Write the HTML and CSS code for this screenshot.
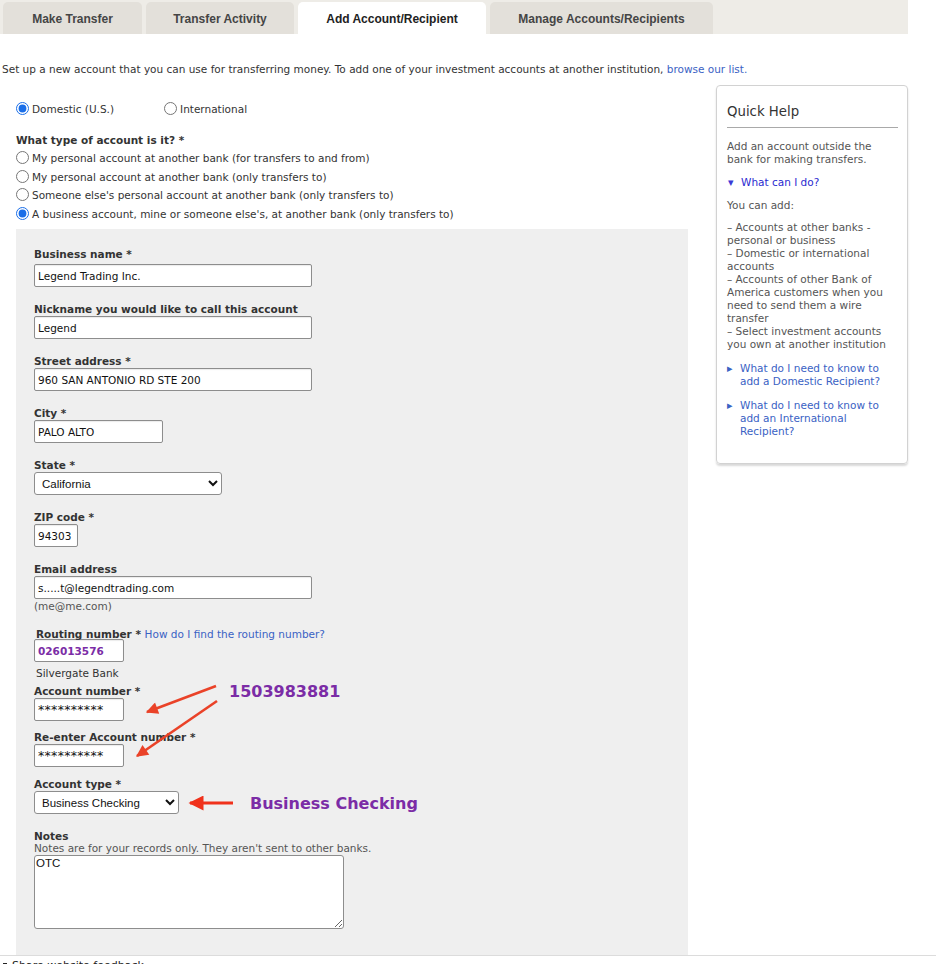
FILE: index.html
```html
<!DOCTYPE html>
<html lang="en">
<head>
  <meta charset="UTF-8" />
  <title>Add Account/Recipient</title>
  <link rel="stylesheet" href="styles.css">
</head>
<body>

  <div class="tabs">
    <div class="tab t1">Make Transfer</div>
    <div class="tab t2">Transfer Activity</div>
    <div class="tab t3 active">Add Account/Recipient</div>
    <div class="tab t4">Manage Accounts/Recipients</div>
  </div>

  <p class="intro">Set up a new account that you can use for transferring money. To add one of your investment accounts at another institution, <a href="#">browse our list.</a></p>

  <div class="layout">
    <div class="main">

      <div class="region">
        <label class="opt"><input type="radio" name="region" checked>Domestic (U.S.)</label>
        <label class="opt intl"><input type="radio" name="region">International</label>
      </div>

      <div class="question">What type of account is it? *</div>
      <label class="opt row"><input type="radio" name="kind">My personal account at another bank (for transfers to and from)</label>
      <label class="opt row"><input type="radio" name="kind">My personal account at another bank (only transfers to)</label>
      <label class="opt row"><input type="radio" name="kind">Someone else's personal account at another bank (only transfers to)</label>
      <label class="opt row"><input type="radio" name="kind" checked>A business account, mine or someone else's, at another bank (only transfers to)</label>

      <!-- form panel -->
      <div class="panel">
        <div class="field first">
          <label class="label">Business name *</label>
          <input class="input wide" value="Legend Trading Inc.">
        </div>
        <div class="field">
          <label class="label">Nickname you would like to call this account</label>
          <input class="input wide" value="Legend">
        </div>
        <div class="field">
          <label class="label">Street address *</label>
          <input class="input wide" value="960 SAN ANTONIO RD STE 200">
        </div>
        <div class="field">
          <label class="label">City *</label>
          <input class="input city" value="PALO ALTO">
        </div>
        <div class="field">
          <label class="label">State *</label>
          <select class="select state"><option>California</option></select>
        </div>
        <div class="field">
          <label class="label">ZIP code *</label>
          <input class="input zip" value="94303">
        </div>
        <div class="field email">
          <label class="label">Email address</label>
          <input class="input wide" value="s.....t@legendtrading.com">
          <div class="hint">(me@me.com)</div>
        </div>
        <div class="field routing">
          <label class="label">Routing number * <a href="#">How do I find the routing number?</a></label>
          <input class="input short purple" value="026013576">
          <div class="bank">Silvergate Bank</div>
        </div>
        <div class="field tight">
          <label class="label">Account number *</label>
          <input class="input short masked" value="**********">
        </div>
        <div class="field tighter">
          <label class="label">Re-enter Account number *</label>
          <input class="input short masked" value="**********">
        </div>
        <div class="field">
          <label class="label">Account type *</label>
          <select class="select acct"><option>Business Checking</option></select>
        </div>
        <div class="field notes">
          <label class="label">Notes</label>
          <div class="hint">Notes are for your records only. They aren't sent to other banks.</div>
          <textarea class="textarea">OTC</textarea>
        </div>

        <!-- red annotations over the form -->
        <svg class="marks" width="300" height="600" viewBox="0 0 300 600">
          <defs>
            <marker id="head" viewBox="0 0 10 10" refX="9" refY="5" markerWidth="15" markerHeight="12" markerUnits="userSpaceOnUse" orient="auto">
              <path d="M0 0 L10 5 L0 10 z" fill="#ea4228"/>
            </marker>
            <marker id="head2" viewBox="0 0 10 10" refX="9" refY="5" markerWidth="17" markerHeight="15" markerUnits="userSpaceOnUse" orient="auto">
              <path d="M0 0 L10 5 L0 10 z" fill="#f0311b"/>
            </marker>
          </defs>
          <line x1="200" y1="457" x2="131" y2="483" stroke="#ea4228" stroke-width="2.6" marker-end="url(#head)"/>
          <line x1="201" y1="472" x2="121" y2="527" stroke="#ea4228" stroke-width="2.6" marker-end="url(#head)"/>
          <line x1="217" y1="574" x2="174" y2="574" stroke="#f0311b" stroke-width="3" marker-end="url(#head2)"/>
        </svg>
        <span class="note n1">1503983881</span>
        <span class="note n2">Business Checking</span>
      </div>
    </div>

    <aside class="help">
      <h3 class="help-title">Quick Help</h3>
      <p>Add an account outside the bank for making transfers.</p>
      <p class="toggle open"><span class="caret">&#9662;</span><a href="#">What can I do?</a></p>
      <p>You can add:</p>
      <p class="list">&ndash; Accounts at other banks - personal or business<br>
        &ndash; Domestic or international accounts<br>
        &ndash; Accounts of other Bank of America customers when you need to send them a wire transfer<br>
        &ndash; Select investment accounts you own at another institution</p>
      <p class="toggle"><span class="caret">&#9656;</span><a href="#">What do I need to know to add a Domestic Recipient?</a></p>
      <p class="toggle"><span class="caret">&#9656;</span><a href="#">What do I need to know to add an International Recipient?</a></p>
    </aside>
  </div>

  <div class="footer"><span class="fb-icon"></span>Share website feedback</div>

</body>
</html>
```

FILE: styles.css
```css
/* ---------------- GENERAL ---------------- */
html, body {
  margin: 0;
  background: #fff;
  font-family: 'DejaVu Sans', Verdana, sans-serif;
  font-size: 10.5px;
  color: #333;
  overflow: hidden;
}

a {
  color: #3a62c4;
  text-decoration: none;
}

/* ---------------- TABS ---------------- */
.tabs {
  display: flex;
  gap: 4px;
  width: 908px;
  height: 34px;
  padding-left: 3px;
  background: #eeece7;
  box-sizing: border-box;
  align-items: flex-end;
}

.tab {
  height: 32px;
  line-height: 34px;
  box-sizing: border-box;
  background: #e3e0da;
  border-radius: 5px 5px 0 0;
  text-align: center;
  font-family: 'Liberation Sans', Arial, sans-serif;
  font-weight: bold;
  font-size: 12px;
  color: #454545;
}

.t1 { width: 139px; }
.t2 { width: 148px; }
.t3 { width: 188px; }
.t4 { width: 223px; }

.tab.active {
  background: #fff;
  color: #222;
}

.intro {
  margin: 29px 0 0 2px;
  line-height: 13px;
}

/* ---------------- LAYOUT ---------------- */
.layout {
  display: grid;
  grid-template-columns: 672px 192px;
  gap: 28px;
  align-items: start;
  margin-top: 9px;
  padding-left: 16px;
}

.main {
  padding-top: 15px;
}

.opt input {
  width: 13px;
  height: 13px;
  margin: 0 3px 0 0;
  vertical-align: -2px;
  accent-color: #1a6ee8;
}

.region {
  display: flex;
  line-height: 18px;
}

.intl {
  margin-left: 50px;
}

.question {
  margin-top: 13px;
  line-height: 18px;
  font-weight: bold;
}

.row {
  display: block;
  line-height: 18.5px;
}

/* ---------------- FORM PANEL ---------------- */
.panel {
  position: relative;
  margin-top: 6px;
  padding: 17px 18px 25px;
  background: #efefef;
}

.field {
  margin-bottom: 14px;
}

.label {
  display: block;
  line-height: 13px;
  padding-top: 2px;
  font-weight: bold;
}

.label a {
  font-weight: normal;
}

.first .label { margin-bottom: 3px; }

.email .hint { padding-top: 1px; }
.email { margin-bottom: 13px; }

.routing { margin-bottom: 3px; }
.routing .label { margin-bottom: -2px; padding-left: 2px; }
.tight { margin-bottom: 8px; }
.tighter { margin-bottom: 9px; }
.notes .label { margin-bottom: -1px; }

.input {
  display: block;
  height: 23px;
  box-sizing: border-box;
  padding: 0 3px;
  border: 1px solid #8d8d8d;
  border-radius: 2px;
  background: #fff;
  font-family: 'DejaVu Sans', Verdana, sans-serif;
  font-size: 10.5px;
  color: #111;
  box-shadow: inset 0 1px 1px rgba(0, 0, 0, 0.08);
}

.wide { width: 278px; }
.city { width: 129px; }
.zip { width: 44px; }
.short { width: 90px; }

.purple {
  color: #7b2ca6;
  font-weight: bold;
}

.masked {
  font-size: 12.5px;
  letter-spacing: 0.3px;
}

.select {
  display: block;
  height: 23px;
  box-sizing: border-box;
  border: 1px solid #8d8d8d;
  border-radius: 3px;
  background: #fff;
  font-family: 'Liberation Sans', Arial, sans-serif;
  font-size: 11.5px;
  color: #111;
  padding-left: 3px;
}

.state { width: 188px; }
.acct { width: 145px; }

.hint {
  line-height: 13px;
  color: #555;
}

.bank {
  margin-top: 5px;
  padding-left: 2px;
  line-height: 13px;
}

.textarea {
  display: block;
  width: 310px;
  height: 74px;
  box-sizing: border-box;
  padding: 1px;
  border: 1px solid #8d8d8d;
  border-radius: 3px;
  font-family: 'Liberation Sans', Arial, sans-serif;
  font-size: 11.5px;
  color: #111;
}

/* annotations drawn over the screenshot */
.marks {
  position: absolute;
  top: 0;
  left: 0;
  pointer-events: none;
}

.note {
  position: absolute;
  font-weight: bold;
  font-size: 16px;
  line-height: 18px;
  color: #7b2ca6;
}

.n1 { left: 213px; top: 454px; }
.n2 { left: 234px; top: 566px; }

/* ---------------- QUICK HELP ---------------- */
.help {
  border: 1px solid #d2d2d2;
  border-radius: 4px;
  box-shadow: 0 2px 2px rgba(0, 0, 0, 0.15);
  padding: 18px 9px 26px 10px;
  color: #555;
  line-height: 13px;
  height: 379px;
  box-sizing: border-box;
}

.help-title {
  margin: 0;
  padding-bottom: 7px;
  border-bottom: 1px solid #a9a9a9;
  font-weight: normal;
  font-size: 13.3px;
  line-height: 16px;
  color: #333;
}

.help p {
  margin: 10px 0 0;
}

.help-title + p {
  margin-top: 12px;
}

.toggle {
  display: flex;
}

.help .list { margin-top: 9px; }
.help .list + .toggle { margin-top: 11px; }
.help .toggle + .toggle { margin-top: 11px; }

.caret {
  width: 13px;
  flex: none;
  font-size: 11px;
  color: #3a62c4;
}

.open .caret { color: #3a3ad6; padding-left: 1px; }
.open a { color: #2a2ad0; }

/* ---------------- FOOTER ---------------- */
.footer {
  position: fixed;
  left: 0;
  top: 955px;
  width: 100%;
  border-top: 1px solid #dcdcdc;
  padding: 3px 0 0 3px;
  font-size: 11px;
  line-height: 13px;
  color: #222;
  background: #fff;
}

.fb-icon {
  display: inline-block;
  width: 4px;
  height: 6px;
  background: #222;
  margin-right: 5px;
}
```
